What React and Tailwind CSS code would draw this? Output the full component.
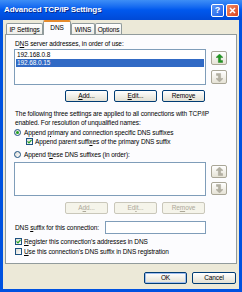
import React from 'react';

// Windows XP style "Advanced TCP/IP Settings" dialog, DNS tab

const Btn = ({ children, disabled, def, className = '' }) => (
    <div
        className={`h-[12px] flex items-center justify-center rounded-[2px] border text-[6.5px] tracking-[-0.1px] ${
            disabled
                ? 'border-[#c9c7ba] text-[#aca899] bg-[#f5f4ea]'
                : 'border-[#003c74] text-black bg-linear-to-b from-white to-[#e3e0d3]'
        } ${def ? 'shadow-[inset_0_0_0_1px_#9fbdf0]' : ''} ${className}`}
    >
        {children}
    </div>
);

const ArrowBtn = ({ down, disabled, className = '' }) => (
    <div className={`w-[16px] flex items-center justify-center rounded-[2px] border border-[#a9a697] bg-linear-to-b from-white to-[#e6e3d6] ${className}`}>
        <svg width="7" height="9" viewBox="0 0 7 9" className={down ? 'rotate-180' : ''}>
            <path
                d="M3.5 0 L7 3.4 H4.6 V6.6 H6.6 V8.6 H2.4 V3.4 H0 Z"
                fill={disabled ? '#b3b0a2' : '#1f9a1f'}
                stroke={disabled ? '#9c9a8c' : '#0f6a0f'}
                strokeWidth="0.4"
            />
        </svg>
    </div>
);

const Radio = ({ checked }) => (
    <div className="w-[7px] h-[7px] rounded-full border border-[#1c5180] bg-linear-to-br from-[#dcdbd4] to-white flex items-center justify-center shrink-0">
        {checked && <div className="w-[3px] h-[3px] rounded-full bg-[#21a121]" />}
    </div>
);

const Check = ({ checked }) => (
    <div className="w-[7px] h-[7px] border border-[#1c5180] bg-linear-to-br from-[#dcdbd4] to-white flex items-center justify-center shrink-0">
        {checked && (
            <svg width="5" height="5" viewBox="0 0 5 5">
                <path d="M0.5 2.4 L2 3.9 L4.6 0.9" fill="none" stroke="#21a121" strokeWidth="1.2" />
            </svg>
        )}
    </div>
);

const Tab = ({ label, selected, w }) => (
    <div
        className={`${w} flex items-center justify-center border border-[#919b9c] rounded-t-[2px] text-[6.5px] tracking-[-0.1px] ${
            selected
                ? 'h-[15px] relative z-10 border-b-0 border-t-2 border-t-[#e68b2c] bg-[#fcfcfe] pb-[1px]'
                : 'h-[12px] border-b-0 bg-linear-to-b from-white to-[#ecebe6]'
        }`}
    >
        {label}
    </div>
);

export default function App() {
    return (
        <div className="w-[242px] h-[292px] flex flex-col bg-[#0052e0] font-['Liberation_Sans',Arial,sans-serif] text-black overflow-hidden">
            {/* Title bar */}
            <div className="h-[20px] shrink-0 flex items-center pl-[4px] pr-[3px] bg-linear-to-b from-[#3d8ef6] via-[#0058ee] to-[#0049d6]">
                <span className="text-white font-bold text-[8px] tracking-[-0.1px] [text-shadow:1px_1px_0_#0a2a8a]">Advanced TCP/IP Settings</span>
                <div className="ml-auto flex gap-[2px]">
                    <div className="w-[13px] h-[13px] rounded-[2px] border border-white bg-linear-to-br from-[#5a95f7] to-[#1c5fe8] flex items-center justify-center text-white font-bold text-[9px] leading-none">
                        ?
                    </div>
                    <div className="w-[13px] h-[13px] rounded-[2px] border border-white bg-linear-to-br from-[#f08a63] to-[#d8411c] flex items-center justify-center">
                        <svg width="7" height="7" viewBox="0 0 7 7">
                            <path d="M1 1 L6 6 M6 1 L1 6" stroke="white" strokeWidth="1.5" />
                        </svg>
                    </div>
                </div>
            </div>

            {/* Body */}
            <div className="h-[269px] mx-[3px] bg-[#ece9d8] pt-[1px] px-[2px] flex flex-col">
                {/* Tabs */}
                <div className="h-[14px] flex items-end pl-[1px] -mb-[1px]">
                    <Tab label="IP Settings" w="w-[37px]" />
                    <Tab label="DNS" w="w-[28px]" selected />
                    <Tab label="WINS" w="w-[24px]" />
                    <Tab label="Options" w="w-[27px]" />
                </div>

                {/* Tab panel */}
                <div className="h-[230px] border border-[#919b9c] bg-[#fcfcfe] pt-[5px] pl-[8px] text-[6.5px] tracking-[-0.1px]">
                    <div className="h-[8px] leading-[8px] pl-[1px]">
                        D<u>N</u>S server addresses, in order of use:
                    </div>

                    <div className="mt-[1px] flex gap-[5px]">
                        <div className="w-[192px] h-[36px] border border-[#7f9db9] bg-white pt-[1px] px-[1px]">
                            <div className="h-[8px] leading-[8px] pl-[1px]">192.168.0.8</div>
                            <div className="h-[8px] leading-[8px] pl-[1px] bg-[#316ac5] text-white">192.68.0.15</div>
                        </div>
                        <div className="flex flex-col pt-[2px] gap-[5px]">
                            <ArrowBtn className="h-[14px]" />
                            <ArrowBtn className="h-[14px]" down disabled />
                        </div>
                    </div>

                    <div className="mt-[5px] w-[192px] flex justify-end pr-[1px]">
                        <Btn className="w-[43px]"><span><u>A</u>dd...</span></Btn>
                        <Btn className="w-[43px] ml-[6px]"><span><u>E</u>dit...</span></Btn>
                        <Btn className="w-[43px] ml-[5px]"><span>Remo<u>v</u>e</span></Btn>
                    </div>

                    <div className="mt-[7px] leading-[9px] pl-[1px] whitespace-nowrap">
                        The following three settings are applied to all connections with TCP/IP
                        <br />
                        enabled. For resolution of unqualified names:
                    </div>

                    <div className="mt-[1px] h-[9px] flex items-center gap-[3px]">
                        <Radio checked />
                        <span>Append <u>p</u>rimary and connection specific DNS suffixes</span>
                    </div>
                    <div className="h-[9px] flex items-center gap-[2px] pl-[12px]">
                        <Check checked />
                        <span>Append parent suffi<u>x</u>es of the primary DNS suffix</span>
                    </div>
                    <div className="mt-[4px] h-[9px] flex items-center gap-[3px]">
                        <Radio />
                        <span>Append t<u>h</u>ese DNS suffixes (in order):</span>
                    </div>

                    <div className="mt-[3px] flex gap-[5px]">
                        <div className="w-[192px] h-[34px] border border-[#7f9db9] bg-white" />
                        <div className="flex flex-col pt-[3px] gap-[4px]">
                            <ArrowBtn className="h-[13px]" disabled />
                            <ArrowBtn className="h-[13px]" down disabled />
                        </div>
                    </div>

                    <div className="mt-[6px] w-[192px] flex justify-end pr-[1px]">
                        <Btn disabled className="w-[43px]"><span>A<u>d</u>d...</span></Btn>
                        <Btn disabled className="w-[43px] ml-[6px]"><span>Ed<u>i</u>t...</span></Btn>
                        <Btn disabled className="w-[43px] ml-[5px]"><span>Re<u>m</u>ove</span></Btn>
                    </div>

                    <div className="mt-[7px] h-[13px] flex items-center">
                        <span className="w-[91px] pl-[1px]">DNS <u>s</u>uffix for this connection:</span>
                        <div className="w-[101px] h-[13px] border border-[#7f9db9] bg-white" />
                    </div>

                    <div className="mt-[3px] h-[9px] flex items-center gap-[2px] pl-[1px]">
                        <Check checked />
                        <span><u>R</u>egister this connection's addresses in DNS</span>
                    </div>
                    <div className="mt-[1px] h-[9px] flex items-center gap-[2px] pl-[1px]">
                        <Check />
                        <span><u>U</u>se this connection's DNS suffix in DNS registration</span>
                    </div>
                </div>

                {/* OK / Cancel */}
                <div className="mt-[8px] flex justify-end pr-[1px]">
                    <Btn def className="w-[43px]">OK</Btn>
                    <Btn className="w-[44px] ml-[5px]">Cancel</Btn>
                </div>
            </div>
        </div>
    );
}
